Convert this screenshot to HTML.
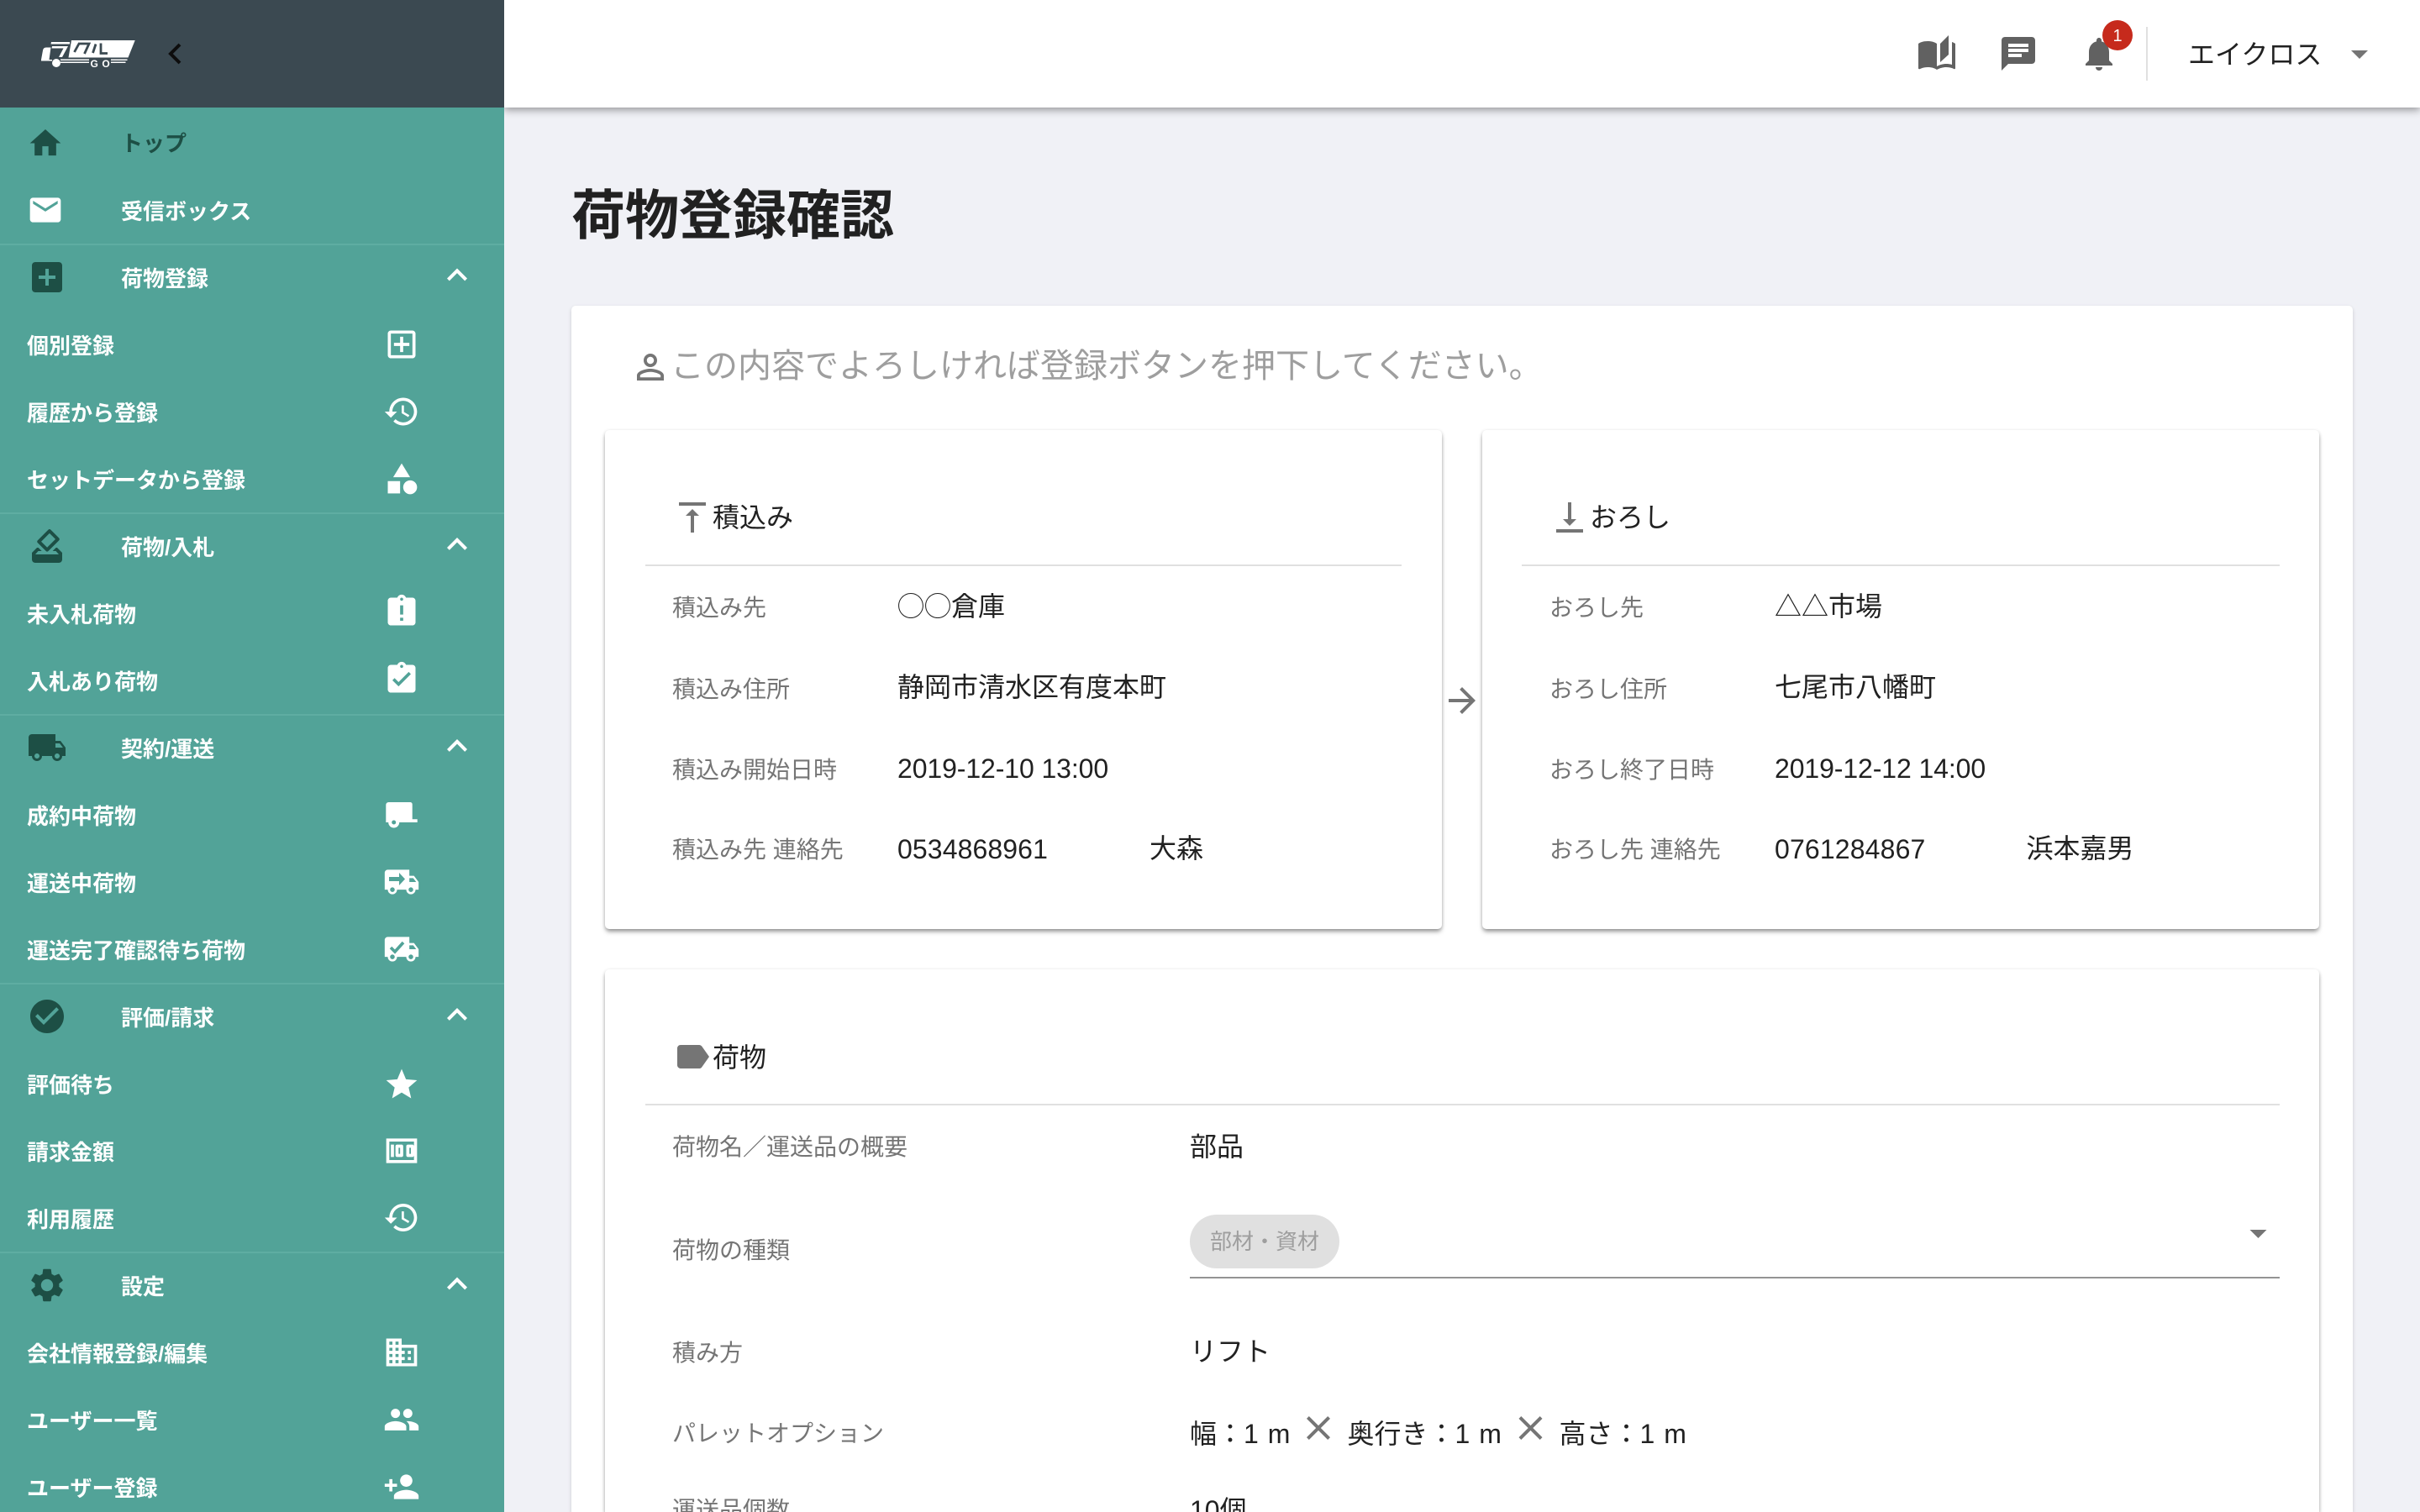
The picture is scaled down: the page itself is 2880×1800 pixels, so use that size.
<!DOCTYPE html>
<html lang="ja"><head><meta charset="utf-8"><title>荷物登録確認</title>
<style>
html,body{margin:0;padding:0;width:2880px;height:1800px;overflow:hidden;background:#f0f1f6}
body{position:relative;font-family:"Liberation Sans","Noto Sans CJK JP",sans-serif;color:#212121}
#page{position:absolute;left:0;top:0;width:2880px;height:1800px;overflow:hidden}
.t{position:absolute;white-space:nowrap;line-height:1}
.b{position:absolute;box-sizing:border-box}
.s{font-size:26px;font-weight:700;color:#fff}
.l{font-size:28px;color:#757575}
.v{font-size:32px;color:#212121}
.card{background:#fff;border-radius:5px;box-shadow:0 4px 6px -1px rgba(0,0,0,.35),0 2px 4px rgba(0,0,0,.12),0 0 4px rgba(0,0,0,.06)}
.dv{background:#e0e0e0;height:2px}
.sd{background:#5fada2;height:2px;left:0;width:600px}
svg{position:absolute;left:0;top:0;overflow:visible}
</style></head><body><div id="page">

<div class="b" style="left:680px;top:364px;width:2120px;height:1436px;background:#fff;border-radius:5px 5px 0 0;box-shadow:0 2px 5px rgba(0,0,0,.16)"></div>
<div class="b card" style="left:720px;top:512px;width:996px;height:594px"></div>
<div class="b card" style="left:1764px;top:512px;width:996px;height:594px"></div>
<div class="b card" style="left:720px;top:1154px;width:2040px;height:646px;border-radius:5px 5px 0 0"></div>

<div class="b" style="left:600px;top:0;width:2280px;height:128px;background:#fff;box-shadow:0 3px 9px rgba(0,0,0,.38)"></div>
<div class="b" style="left:0;top:0;width:600px;height:1800px;background:#52a398"></div>
<div class="b" style="left:0;top:0;width:600px;height:128px;background:#3b4951"></div>
<div class="b sd" style="top:290px"></div>
<div class="b sd" style="top:610px"></div>
<div class="b sd" style="top:850px"></div>
<div class="b sd" style="top:1170px"></div>
<div class="b sd" style="top:1490px"></div>

<span class="t s" style="left:144px;top:157.5px;color:#1d4f45">トップ</span>
<span class="t s" style="left:144px;top:238.5px">受信ボックス</span>
<span class="t s" style="left:144px;top:318.5px">荷物登録</span>
<span class="t s" style="left:32px;top:398.5px">個別登録</span>
<span class="t s" style="left:32px;top:478.5px">履歴から登録</span>
<span class="t s" style="left:32px;top:558.5px">セットデータから登録</span>
<span class="t s" style="left:144px;top:638.5px">荷物/入札</span>
<span class="t s" style="left:32px;top:718.5px">未入札荷物</span>
<span class="t s" style="left:32px;top:798.5px">入札あり荷物</span>
<span class="t s" style="left:144px;top:878.5px">契約/運送</span>
<span class="t s" style="left:32px;top:958.5px">成約中荷物</span>
<span class="t s" style="left:32px;top:1038.5px">運送中荷物</span>
<span class="t s" style="left:32px;top:1118.5px">運送完了確認待ち荷物</span>
<span class="t s" style="left:144px;top:1198.5px">評価/請求</span>
<span class="t s" style="left:32px;top:1278.5px">評価待ち</span>
<span class="t s" style="left:32px;top:1358.5px">請求金額</span>
<span class="t s" style="left:32px;top:1438.5px">利用履歴</span>
<span class="t s" style="left:144px;top:1518.5px">設定</span>
<span class="t s" style="left:32px;top:1598.5px">会社情報登録/編集</span>
<span class="t s" style="left:32px;top:1678.5px">ユーザー一覧</span>
<span class="t s" style="left:32px;top:1758.5px">ユーザー登録</span>

<svg width="2880" height="1800" viewBox="0 0 2880 1800" style="overflow:hidden">
<!-- logo -->
<g fill="#fff">
<path d="M85 48H160.7L152.5 68.5H81.5z"/>
<path d="M61 50H83V52.5H60.5zM62 55H81L74 68H70L75.5 57.5H61.5z"/>
<path d="M49 71L51 60Q51.600 56.500 55 56.500H60.500L58.500 71z"/>
<circle cx="67" cy="75" r="5"/>
<path d="M72 70.500H106V72H72zM72 73.500H106V75H72zM132 70.500H151.500V72H132zM132 73.500H149.500V75H132zM49 71H62V72.500H49z"/>
</g>
<g fill="none" stroke="#3b4951" stroke-width="2.800">
<path d="M93 52H106L100.500 64"/>
<path d="M94 52L88.500 62"/>
<path d="M114 52.500L110.500 63"/>
<path d="M120 51.500V63.500H128"/>
</g>
<text x="107.500" y="80" font-size="12" font-weight="700" fill="#fff" letter-spacing="4.500" font-family="Liberation Sans">GO</text>
<path d="M214 53L203 64L214 75" fill="none" stroke="#0d0d0d" stroke-width="4"/>

<!-- sidebar group icons -->
<g transform="translate(32,148.5) scale(1.8333)" fill="#1d4f45"><path d="M10 20v-6h4v6h5v-8h3L12 3 2 12h3v8z"/></g>
<g transform="translate(32,228) scale(1.8333)" fill="#fff"><path d="M20 4H4c-1.1 0-1.99.9-1.99 2L2 18c0 1.1.9 2 2 2h16c1.1 0 2-.9 2-2V6c0-1.1-.9-2-2-2zm0 4l-8 5-8-5V6l8 5 8-5v2z"/></g>
<g transform="translate(32,306) scale(2)" fill="#1d4f45"><path d="M19 3H5c-1.11 0-2 .9-2 2v14c0 1.1.89 2 2 2h14c1.1 0 2-.9 2-2V5c0-1.1-.9-2-2-2zm-2 10h-4v4h-2v-4H7v-2h4V7h2v4h4v2z"/></g>
<g transform="translate(32,626) scale(2)" fill="#1d4f45"><path d="M18 13h-.68l-2 2h1.91L19 17H5l1.78-2h2.05l-2-2H6l-3 3v4c0 1.1.89 2 1.99 2H19c1.1 0 2-.89 2-2v-4l-3-3zm-1-5.05l-4.95 4.95-3.54-3.54 4.95-4.95L17 7.95zm-4.24-5.66L6.39 8.66c-.39.39-.39 1.02 0 1.41l4.95 4.95c.39.39 1.02.39 1.41 0l6.36-6.36c.39-.39.39-1.02 0-1.41L14.16 2.3c-.38-.4-1.01-.4-1.4-.01z"/></g>
<g transform="translate(32,866) scale(2)" fill="#1d4f45"><path d="M20 8h-3V4H3c-1.1 0-2 .9-2 2v11h2c0 1.66 1.34 3 3 3s3-1.34 3-3h6c0 1.66 1.34 3 3 3s3-1.34 3-3h2v-5l-3-4zM6 18.5c-.83 0-1.5-.67-1.5-1.5s.67-1.5 1.5-1.5 1.5.67 1.5 1.5-.67 1.5-1.5 1.5zm13.5-9l1.96 2.5H17V9.5h2.5zm-1.5 9c-.83 0-1.5-.67-1.5-1.5s.67-1.5 1.5-1.5 1.5.67 1.5 1.5-.67 1.5-1.5 1.5z"/></g>
<g transform="translate(32,1186) scale(2)" fill="#1d4f45"><path d="M12 2C6.48 2 2 6.48 2 12s4.48 10 10 10 10-4.48 10-10S17.52 2 12 2zm-2 15l-5-5 1.41-1.41L10 14.17l7.59-7.59L19 8l-9 9z"/></g>
<g transform="translate(32,1506) scale(2)" fill="#1d4f45"><path d="M19.14 12.94c.04-.3.06-.61.06-.94 0-.32-.02-.64-.07-.94l2.03-1.58c.18-.14.23-.41.12-.61l-1.92-3.32c-.12-.22-.37-.29-.59-.22l-2.39.96c-.5-.38-1.03-.7-1.62-.94l-.36-2.54c-.04-.24-.24-.41-.48-.41h-3.84c-.24 0-.43.17-.47.41l-.36 2.54c-.59.24-1.13.57-1.62.94l-2.39-.96c-.22-.08-.47 0-.59.22L2.74 8.87c-.12.21-.08.47.12.61l2.03 1.58c-.05.3-.09.63-.09.94s.02.64.07.94l-2.03 1.58c-.18.14-.23.41-.12.61l1.92 3.32c.12.22.37.29.59.22l2.39-.96c.5.38 1.03.7 1.62.94l.36 2.54c.05.24.24.41.48.41h3.84c.24 0 .44-.17.47-.41l.36-2.54c.59-.24 1.13-.56 1.62-.94l2.39.96c.22.08.47 0 .59-.22l1.92-3.32c.12-.22.07-.47-.12-.61l-2.01-1.58zM12 15.6c-1.98 0-3.6-1.62-3.6-3.6s1.62-3.6 3.6-3.6 3.6 1.62 3.6 3.6-1.62 3.6-3.6 3.6z"/></g>

<!-- chevrons -->
<g fill="#fff">
<path transform="translate(520,303.5) scale(2)" d="M12 8l-6 6 1.41 1.41L12 10.83l4.59 4.58L18 14z"/>
<path transform="translate(520,624) scale(2)" d="M12 8l-6 6 1.41 1.41L12 10.83l4.59 4.58L18 14z"/>
<path transform="translate(520,864) scale(2)" d="M12 8l-6 6 1.41 1.41L12 10.83l4.59 4.58L18 14z"/>
<path transform="translate(520,1184) scale(2)" d="M12 8l-6 6 1.41 1.41L12 10.83l4.59 4.58L18 14z"/>
<path transform="translate(520,1504.5) scale(2)" d="M12 8l-6 6 1.41 1.41L12 10.83l4.59 4.58L18 14z"/>
</g>

<!-- sub icons -->
<g fill="#fff">
<path transform="translate(456,388) scale(1.8333)" d="M19 3H5c-1.1 0-2 .9-2 2v14c0 1.1.9 2 2 2h14c1.1 0 2-.9 2-2V5c0-1.1-.9-2-2-2zm0 16H5V5h14v14zm-8-2h2v-4h4v-2h-4V7h-2v4H7v2h4z"/>
<path transform="translate(456,468) scale(1.8333)" d="M13 3c-4.97 0-9 4.03-9 9H1l3.89 3.89.07.14L9 12H6c0-3.87 3.13-7 7-7s7 3.13 7 7-3.13 7-7 7c-1.93 0-3.68-.79-4.94-2.06l-1.42 1.42C8.27 19.99 10.51 21 13 21c4.97 0 9-4.03 9-9s-4.03-9-9-9zm-1 5v5l4.28 2.54.72-1.21-3.5-2.08V8H12z"/>
<g transform="translate(456,548) scale(1.8333)"><path d="M12 2l-5.5 9h11z"/><circle cx="17.5" cy="17.5" r="4.5"/><path d="M3 13.5h8v8H3z"/></g>
<path transform="translate(456,706) scale(1.8333)" d="M19 3h-4.18C14.4 1.84 13.3 1 12 1c-1.3 0-2.4.84-2.82 2H5c-1.1 0-2 .9-2 2v14c0 1.1.9 2 2 2h14c1.1 0 2-.9 2-2V5c0-1.1-.9-2-2-2zm-6 15h-2v-2h2v2zm0-4h-2V8h2v6zm-1-9c-.55 0-1-.45-1-1s.45-1 1-1 1 .45 1 1-.45 1-1 1z"/>
<path transform="translate(456,786) scale(1.8333)" d="M19 3h-4.18C14.4 1.84 13.3 1 12 1c-1.3 0-2.4.84-2.82 2H5c-1.1 0-2 .9-2 2v14c0 1.1.9 2 2 2h14c1.1 0 2-.9 2-2V5c0-1.1-.9-2-2-2zm-7 0c.55 0 1 .45 1 1s-.45 1-1 1-1-.45-1-1 .45-1 1-1zm-2 14l-4-4 1.41-1.41L10 14.17l6.59-6.59L18 9l-8 8z"/>
<path d="M462.5 955h25.7a2.5 2.5 0 0 1 2.5 2.5v17.8h6V979H459.3v-20.8a3.2 3.2 0 0 1 3.2-3.2z"/>
<circle cx="468.7" cy="979" r="6.5"/>
<path transform="translate(456,1028) scale(1.8333)" d="M20 8h-3V4H3c-1.1 0-2 .9-2 2v11h2c0 1.66 1.34 3 3 3s3-1.34 3-3h6c0 1.66 1.34 3 3 3s3-1.34 3-3h2v-5l-3-4zM6 18.5c-.83 0-1.5-.67-1.5-1.5s.67-1.5 1.5-1.5 1.5.67 1.5 1.5-.67 1.5-1.5 1.5zm13.5-9l1.96 2.5H17V9.5h2.5zm-1.5 9c-.83 0-1.5-.67-1.5-1.5s.67-1.5 1.5-1.5 1.5.67 1.5 1.5-.67 1.5-1.5 1.5z"/>
<path transform="translate(456,1108) scale(1.8333)" d="M20 8h-3V4H3c-1.1 0-2 .9-2 2v11h2c0 1.66 1.34 3 3 3s3-1.34 3-3h6c0 1.66 1.34 3 3 3s3-1.34 3-3h2v-5l-3-4zM6 18.5c-.83 0-1.5-.67-1.5-1.5s.67-1.5 1.5-1.5 1.5.67 1.5 1.5-.67 1.5-1.5 1.5zm13.5-9l1.96 2.5H17V9.5h2.5zm-1.5 9c-.83 0-1.5-.67-1.5-1.5s.67-1.5 1.5-1.5 1.5.67 1.5 1.5-.67 1.5-1.5 1.5z"/>
<path transform="translate(456,1269) scale(1.8333)" d="M12 17.27L18.18 21l-1.64-7.03L22 9.24l-7.19-.61L12 2 9.19 8.63 2 9.24l5.46 4.73L5.82 21z"/>
<path transform="translate(456,1348) scale(1.8333)" fill-rule="evenodd" d="M2 4v16h20V4H2zm2 14V6h16v12H4zM5 8h2v8H5zM9 8h3c.55 0 1 .45 1 1v6c0 .55-.45 1-1 1H9c-.55 0-1-.45-1-1V9c0-.55.45-1 1-1zm1 2v4h1v-4h-1zM16 8h3c.55 0 1 .45 1 1v6c0 .55-.45 1-1 1h-3c-.55 0-1-.45-1-1V9c0-.55.45-1 1-1zm1 2v4h1v-4h-1z"/>
<path transform="translate(456,1427.5) scale(1.8333)" d="M13 3c-4.97 0-9 4.03-9 9H1l3.89 3.89.07.14L9 12H6c0-3.87 3.13-7 7-7s7 3.13 7 7-3.13 7-7 7c-1.93 0-3.68-.79-4.94-2.06l-1.42 1.42C8.27 19.99 10.51 21 13 21c4.97 0 9-4.03 9-9s-4.03-9-9-9zm-1 5v5l4.28 2.54.72-1.21-3.5-2.08V8H12z"/>
<path transform="translate(456,1588) scale(1.8333)" d="M12 7V3H2v18h20V7H12zM6 19H4v-2h2v2zm0-4H4v-2h2v2zm0-4H4V9h2v2zm0-4H4V5h2v2zm4 12H8v-2h2v2zm0-4H8v-2h2v2zm0-4H8V9h2v2zm0-4H8V5h2v2zm10 12h-8v-2h2v-2h-2v-2h2v-2h-2V9h8v10zm-2-8h-2v2h2v-2zm0 4h-2v2h2v-2z"/>
<path transform="translate(456,1668) scale(1.8333)" d="M16 11c1.66 0 2.99-1.34 2.99-3S17.66 5 16 5c-1.66 0-3 1.34-3 3s1.34 3 3 3zm-8 0c1.66 0 2.99-1.34 2.99-3S9.66 5 8 5C6.34 5 5 6.34 5 8s1.34 3 3 3zm0 2c-2.33 0-7 1.17-7 3.5V19h14v-2.5c0-2.33-4.67-3.5-7-3.5zm8 0c-.29 0-.62.02-.97.05 1.16.84 1.97 1.97 1.97 3.45V19h6v-2.5c0-2.33-4.67-3.5-7-3.5z"/>
<path transform="translate(456,1748) scale(1.8333)" d="M15 12c2.21 0 4-1.79 4-4s-1.79-4-4-4-4 1.79-4 4 1.79 4 4 4zm-9-2V7H4v3H1v2h3v3h2v-3h3v-2H6zm9 4c-2.67 0-8 1.34-8 4v2h16v-2c0-2.66-5.33-4-8-4z"/>
</g>
<circle cx="468.7" cy="979" r="2.5" fill="#52a398"/>
<path d="M463 1044h12v-5l7 7.5-7 7.5v-5h-12z" fill="#52a398"/>
<path d="M465 1128l5 5 10-11" fill="none" stroke="#52a398" stroke-width="3.6"/>

<!-- header icons -->
<g fill="#616161">
<path transform="translate(2281,40) scale(2)" d="M19 1l-5 5v11l5-4.5V1zM1 6v14.65c0 .25.25.5.5.5.1 0 .15-.05.25-.05C3.1 20.45 5.05 20 6.5 20c1.95 0 4.05.4 5.5 1.5V6c-1.45-1.1-3.55-1.5-5.5-1.5S2.45 4.9 1 6zm22 13.5V6c-.6-.45-1.25-.75-2-1v13.5c-1.1-.35-2.3-.5-3.5-.5-1.7 0-4.15.65-5.5 1.5v2c1.35-.85 3.8-1.5 5.5-1.5 1.65 0 3.35.3 4.75 1.05.1.05.15.05.25.05.25 0 .5-.25.5-.5v-1.1z"/>
<path transform="translate(2378,40) scale(2)" d="M20 2H4c-1.1 0-1.99.9-1.99 2L2 22l4-4h14c1.1 0 2-.9 2-2V4c0-1.1-.9-2-2-2zM6 9h12v2H6V9zm8 5H6v-2h8v2zm4-6H6V6h12v2z"/>
<path transform="translate(2474,40) scale(2)" d="M12 22c1.1 0 2-.9 2-2h-4c0 1.1.89 2 2 2zm6-6v-5c0-3.07-1.64-5.64-4.5-6.32V4c0-.83-.67-1.5-1.5-1.5s-1.5.67-1.5 1.5v.68C7.63 5.36 6 7.92 6 11v5l-2 2v1h16v-1l-2-2z"/>
</g>
<circle cx="2520" cy="42" r="18" fill="#c62a1c"/>
<text x="2520" y="49" text-anchor="middle" font-size="20" fill="#fff" font-family="Liberation Sans">1</text>
<rect x="2554" y="32" width="2" height="64" fill="#e0e0e0"/>
<path transform="translate(2784,40) scale(2)" d="M7 10l5 5 5-5z" fill="#757575"/>

<!-- content icons -->
<g fill="#757575">
<path transform="translate(750,413) scale(2)" d="M12 5.9c1.16 0 2.1.94 2.1 2.1s-.94 2.1-2.1 2.1S9.9 9.16 9.9 8s.94-2.1 2.1-2.1m0 9c2.97 0 6.1 1.46 6.1 2.1v1.1H5.9V17c0-.64 3.13-2.1 6.1-2.1M12 4C9.79 4 8 5.79 8 8s1.79 4 4 4 4-1.79 4-4-1.79-4-4-4zm0 9c-2.67 0-8 1.34-8 4v3h16v-3c0-2.66-5.33-4-8-4z"/>
<path transform="translate(800,592) scale(2)" d="M8 11h3v10h2V11h3l-4-4-4 4zM4 3v2h16V3H4z"/>
<path transform="translate(1844,592) scale(2)" d="M16 13h-3V3h-2v10H8l4 4 4-4zM4 19v2h16v-2H4z"/>
<path transform="translate(1716,810) scale(2)" d="M12 4l-1.41 1.41L16.17 11H4v2h12.17l-5.58 5.59L12 20l8-8z"/>
<path transform="translate(800,1234) scale(2)" d="M17.63 5.84C17.27 5.33 16.67 5 16 5L5 5.01C3.9 5.01 3 5.9 3 7v10c0 1.1.9 1.99 2 1.99L16 19c.67 0 1.27-.33 1.63-.84L22 12l-4.37-6.16z"/>
<path transform="translate(2663.5,1444) scale(2)" d="M7 10l5 5 5-5z"/>
<path transform="translate(1545,1676) scale(2)" d="M19 6.41L17.59 5 12 10.59 6.41 5 5 6.41 10.59 12 5 17.59 6.41 19 12 13.41 17.59 19 19 17.59 13.41 12z"/>
<path transform="translate(1797.5,1676) scale(2)" d="M19 6.41L17.59 5 12 10.59 6.41 5 5 6.41 10.59 12 5 17.59 6.41 19 12 13.41 17.59 19 19 17.59 13.41 12z"/>
</g>
</svg>

<span class="t" style="left:2604px;top:49px;font-size:32px;color:#212121">エイクロス</span>

<span class="t" style="left:680px;top:225px;font-size:64px;font-weight:700;color:#212121">荷物登録確認</span>
<span class="t" style="left:798px;top:416px;font-size:40px;color:#9e9e9e">この内容でよろしければ登録ボタンを押下してください。</span>

<span class="t v" style="left:848px;top:600px">積込み</span>
<div class="b dv" style="left:768px;top:672px;width:900px"></div>
<span class="t l" style="left:800px;top:710px">積込み先</span>
<span class="t v" style="left:1068px;top:706px">◯◯倉庫</span>
<span class="t l" style="left:800px;top:806.500px">積込み住所</span>
<span class="t v" style="left:1068px;top:802px">静岡市清水区有度本町</span>
<span class="t l" style="left:800px;top:902.500px">積込み開始日時</span>
<span class="t v" style="left:1068px;top:899px;letter-spacing:-.1px">2019-12-10 13:00</span>
<span class="t l" style="left:800px;top:998px">積込み先 連絡先</span>
<span class="t v" style="left:1068px;top:995px;letter-spacing:.1px">0534868961</span>
<span class="t v" style="left:1368px;top:994px">大森</span>

<span class="t v" style="left:1892px;top:600px">おろし</span>
<div class="b dv" style="left:1811px;top:672px;width:902px"></div>
<span class="t l" style="left:1844px;top:710px">おろし先</span>
<span class="t v" style="left:2112px;top:706px">△△市場</span>
<span class="t l" style="left:1844px;top:806.500px">おろし住所</span>
<span class="t v" style="left:2112px;top:802px">七尾市八幡町</span>
<span class="t l" style="left:1844px;top:902.500px">おろし終了日時</span>
<span class="t v" style="left:2112px;top:899px;letter-spacing:-.1px">2019-12-12 14:00</span>
<span class="t l" style="left:1844px;top:998px">おろし先 連絡先</span>
<span class="t v" style="left:2112px;top:995px;letter-spacing:.15px">0761284867</span>
<span class="t v" style="left:2411.500px;top:994px">浜本嘉男</span>

<span class="t v" style="left:848px;top:1242.500px">荷物</span>
<div class="b dv" style="left:768px;top:1314px;width:1945px"></div>
<span class="t l" style="left:800px;top:1352px">荷物名／運送品の概要</span>
<span class="t v" style="left:1416px;top:1349px">部品</span>
<span class="t l" style="left:800px;top:1475px">荷物の種類</span>
<div class="b" style="left:1416px;top:1446px;width:178px;height:64px;border-radius:32px;background:#e0e0e0"></div>
<span class="t" style="left:1440px;top:1465px;font-size:26px;color:#9e9e9e">部材・資材</span>
<div class="b" style="left:1416px;top:1520px;width:1297px;height:2px;background:#949494"></div>
<span class="t l" style="left:800px;top:1596.500px">積み方</span>
<span class="t v" style="left:1416px;top:1593px">リフト</span>
<span class="t l" style="left:800px;top:1692.500px">パレットオプション</span>
<span class="t v" style="left:1416px;top:1690.500px;word-spacing:2px">幅：1 m</span>
<span class="t v" style="left:1603.500px;top:1690.500px;word-spacing:2px">奥行き：1 m</span>
<span class="t v" style="left:1855.500px;top:1690.500px;word-spacing:2px">高さ：1 m</span>
<span class="t l" style="left:800px;top:1784px;height:16px;overflow:hidden">運送品個数</span>
<span class="t v" style="left:1416px;top:1782px;height:18px;overflow:hidden">10個</span>
</div></body></html>
